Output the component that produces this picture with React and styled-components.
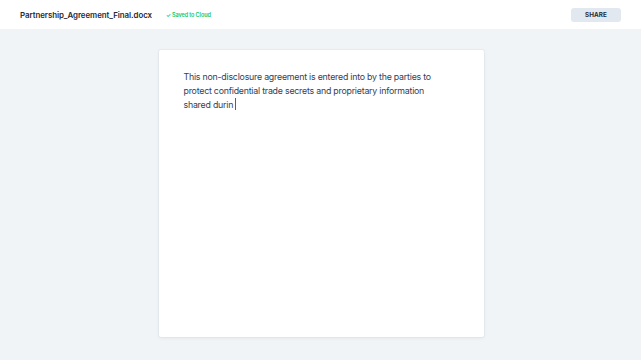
import React from "react";
import styled, { createGlobalStyle } from "styled-components";

const GlobalStyle = createGlobalStyle`
  html, body {
    margin: 0;
    padding: 0;
    background: #f1f4f7;
    font-family: "Inter", "Liberation Sans", sans-serif;
  }
`;

export default function App() {
  return (
    <>
      <GlobalStyle />
      <StyledPage>
        <StyledHeader>
          <StyledTitleGroup>
            <StyledFileName>Partnership_Agreement_Final.docx</StyledFileName>
            <StyledSaved>✓ Saved to Cloud</StyledSaved>
          </StyledTitleGroup>
          <StyledShareButton>SHARE</StyledShareButton>
        </StyledHeader>
        <StyledCanvas>
          <StyledPaper>
            <StyledText>
              This non-disclosure agreement is entered into by the parties to
              protect confidential trade secrets and proprietary information
              shared durin <StyledCaret />
            </StyledText>
          </StyledPaper>
        </StyledCanvas>
      </StyledPage>
    </>
  );
}

const StyledPage = styled.div`
  width: 641px;
  height: 360px;
  display: flex;
  flex-direction: column;
  overflow: hidden;
`;

const StyledHeader = styled.div`
  height: 29px;
  box-sizing: border-box;
  background: #ffffff;
  display: flex;
  align-items: center;
  justify-content: space-between;
  padding: 0 20px 0 20px;
`;

const StyledTitleGroup = styled.div`
  display: flex;
  align-items: center;
  gap: 14px;
`;

const StyledFileName = styled.div`
  font-size: 7.9px;
  font-weight: 600;
  color: #1f2937;
  letter-spacing: -0.05px;
`;

const StyledSaved = styled.div`
  font-size: 5.5px;
  font-weight: 600;
  color: #22c55e;
  letter-spacing: -0.1px;
`;

const StyledShareButton = styled.div`
  width: 50px;
  height: 14px;
  border-radius: 3px;
  background: #e2e8f0;
  color: #1f2937;
  font-size: 6.3px;
  font-weight: 700;
  display: flex;
  align-items: center;
  justify-content: center;
  letter-spacing: 0.1px;
`;

const StyledCanvas = styled.div`
  flex: 1;
  display: flex;
  justify-content: center;
  padding-top: 21px;
  padding-bottom: 23px;
`;

const StyledPaper = styled.div`
  width: 325px;
  height: 287px;
  margin-left: 1px;
  background: #ffffff;
  border-radius: 2px;
  box-shadow: 0 1px 4px rgba(15, 23, 42, 0.06), 0 0 0 1px rgba(226, 232, 240, 0.5);
  box-sizing: border-box;
  padding: 20px 25px;
`;

const StyledText = styled.div`
  font-size: 8.8px;
  line-height: 14px;
  color: #334155;
  letter-spacing: -0.22px;
  width: 256px;
`;

const StyledCaret = styled.span`
  display: inline-block;
  width: 1px;
  height: 12px;
  background: #3b5bdb;
  vertical-align: -2px;
`;
